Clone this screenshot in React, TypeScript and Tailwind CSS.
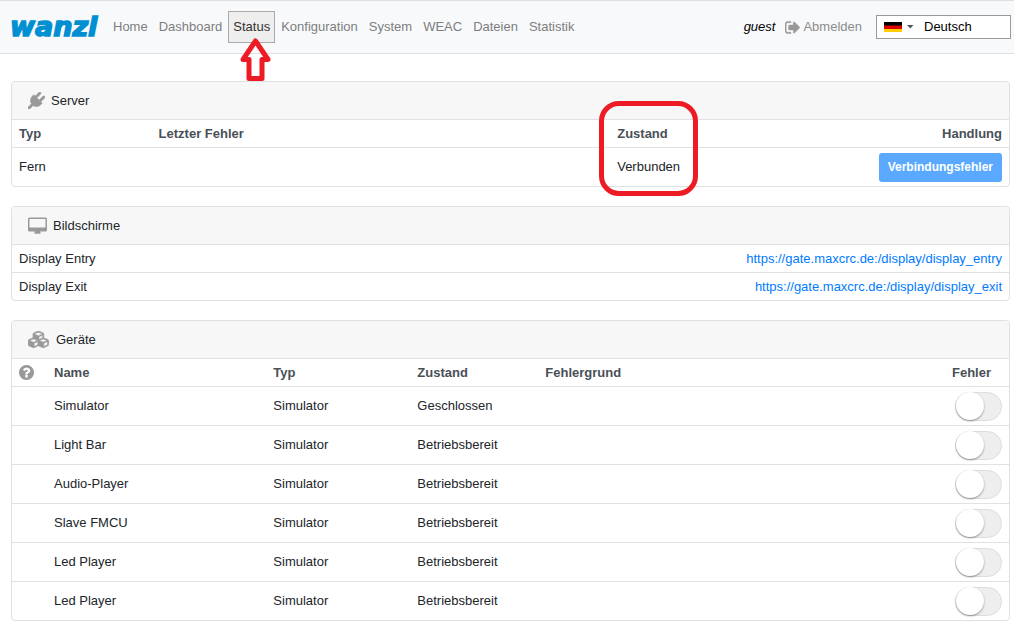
import { useState } from "react";
import type { ReactNode } from "react";
import clsx from "clsx";

const NAV_LINKS = [
  "Home",
  "Dashboard",
  "Status",
  "Konfiguration",
  "System",
  "WEAC",
  "Dateien",
  "Statistik",
];

const DISPLAYS = [
  { name: "Display Entry", url: "https://gate.maxcrc.de:/display/display_entry" },
  { name: "Display Exit", url: "https://gate.maxcrc.de:/display/display_exit" },
];

const DEVICES = [
  { name: "Simulator", state: "Geschlossen" },
  { name: "Light Bar", state: "Betriebsbereit" },
  { name: "Audio-Player", state: "Betriebsbereit" },
  { name: "Slave FMCU", state: "Betriebsbereit" },
  { name: "Led Player", state: "Betriebsbereit" },
  { name: "Led Player", state: "Betriebsbereit" },
];

const TH = "h-7 border-t border-[#dee2e6] px-[7px] text-left font-bold text-[#495057]";
const TD = "border-t border-[#dee2e6] px-[7px]";

function PlugIcon() {
  return (
    <svg
      viewBox="0 0 1792 1792"
      fill="currentColor"
      stroke="currentColor"
      strokeWidth="60"
      className="size-[17px]"
    >
      <path d="M1755 453q37 38 37 90.5t-37 90.5l-401 400 150 150-160 160q-163 163-389.5 186.5t-411.5-100.5l-362 362h-181v-181l362-362q-124-185-100.5-411.5t186.5-389.5l160-160 150 150 400-401q38-37 91-37t90 37 37 90.5-37 90.5l-400 401 234 234 401-400q38-37 91-37t90 37z" />
    </svg>
  );
}

function DesktopIcon() {
  return (
    <svg viewBox="0 0 19 17" fill="currentColor" className="h-[17px] w-[19px]">
      <path
        fillRule="evenodd"
        d="M1.5 0.5h16a1.5 1.5 0 0 1 1.5 1.5v11a1.5 1.5 0 0 1-1.5 1.5h-5.3c0 .8.5 1.1.5 1.6q0 .6-.6.6H6.9q-.6 0-.6-.6c0-.5.5-.8.5-1.6H1.5A1.5 1.5 0 0 1 0 13V2A1.5 1.5 0 0 1 1.5.5zM1.5 2.200v8.300h16V2.200q0-.2-.2-.2H1.700q-.2 0-.2.2z"
      />
    </svg>
  );
}

function CubesIcon() {
  return (
    <svg
      viewBox="0 0 2304 1792"
      fill="currentColor"
      stroke="currentColor"
      strokeWidth="50"
      className="h-[17px] w-[22px]"
    >
      <path d="M640 1632l384-192v-314l-384 164v342zm-64-454l404-173-404-173-404 173zm1088 454l384-192v-314l-384 164v342zm-64-454l404-173-404-173-404 173zm-448-293l384-165v-266l-384 164v267zm-64-379l441-189-441-189-441 189zm1088 518v416q0 36-19 67t-52 47l-448 224q-25 14-57 14t-57-14l-448-224q-4-2-7-4-2 2-7 4l-448 224q-25 14-57 14t-57-14l-448-224q-33-16-52-47t-19-67v-416q0-38 21.5-70t56.5-48l434-186v-400q0-38 21.5-70t56.5-48l448-192q23-10 50-10t50 10l448 192q35 16 56.5 48t21.5 70v400l434 186q36 16 57 48t21 70z" />
    </svg>
  );
}

function QuestionIcon() {
  return (
    <svg viewBox="128 128 1536 1536" fill="#999" className="size-[15px]">
      <path d="M1024 1376v-192q0-14-9-23t-23-9h-192q-14 0-23 9t-9 23v192q0 14 9 23t23 9h192q14 0 23-9t9-23zm256-672q0-88-55.5-163t-138.5-116-170-41q-243 0-371 213-15 24 8 42l132 100q7 6 19 6 16 0 25-12 53-68 86-92 34-24 86-24 48 0 85.5 26t37.5 59q0 38-20 61t-68 45q-63 28-115.5 86.5t-52.5 125.5v36q0 14 9 23t23 9h192q14 0 23-9t9-23q0-19 21.5-49.5t54.5-49.5q32-18 49-28.5t46-35 44.5-48 28-60.5 12.5-81zm384 192q0 209-103 385.5t-279.5 279.5-385.5 103-385.5-103-279.5-279.5-103-385.5 103-385.5 279.5-279.5 385.5-103 385.5 103 279.5 279.5 103 385.5z" />
    </svg>
  );
}

function SignOutIcon() {
  return (
    <svg
      viewBox="64 0 1600 1792"
      fill="#999"
      stroke="#999"
      strokeWidth="50"
      className="h-[17px] w-[15px]"
    >
      <path d="M704 1440q0 4 1 20t.5 26.5-3 23.5-10 19.5-20.5 6.5h-320q-119 0-203.5-84.5t-84.5-203.5v-704q0-119 84.5-203.5t203.5-84.5h320q13 0 22.5 9.5t9.5 22.5q0 4 1 20t.5 26.5-3 23.5-10 19.5-20.5 6.5h-320q-66 0-113 47t-47 113v704q0 66 47 113t113 47h312l11.5 1 11.5 3 8 5.5 7 9 2 13.5zm928-544q0 26-19 45l-544 544q-19 19-45 19t-45-19-19-45v-288h-448q-26 0-45-19t-19-45v-384q0-26 19-45t45-19h448v-288q0-26 19-45t45-19 45 19l544 544q19 19 19 45z" />
    </svg>
  );
}

function Logo() {
  return (
    <a href="#home" aria-label="wanzl">
      <svg viewBox="0 0 92 32" className="h-8 w-[92px] overflow-visible">
        <text
          x="0"
          y="25"
          fill="#0090d2"
          stroke="#0090d2"
          strokeWidth="1.5"
          className="font-['DejaVu_Sans'] text-[27px] font-bold italic"
        >
          wanzl
        </text>
      </svg>
    </a>
  );
}

// red arrow pointing up at the active link
function Arrow() {
  return (
    <svg
      viewBox="0 0 32 43"
      fill="none"
      stroke="#ed1c24"
      strokeWidth="5"
      strokeLinejoin="round"
      className="pointer-events-none absolute top-[26px] left-[11px] z-10 h-[43px] w-8"
    >
      <path d="M15.5 3L28 21.5H22V40.500H9V21.5H3Z" />
    </svg>
  );
}

function Header() {
  return (
    <header className="flex h-[54px] items-center border-y border-[#dee0e3] bg-[#f8f9fb] pr-[3px] pl-[10px]">
      <Logo />
      <nav className="ml-[6px] flex items-center gap-px text-[#7d7e80]">
        {NAV_LINKS.map((link) => (
          <a
            key={link}
            href={`#${link.toLowerCase()}`}
            className={clsx(
              "relative flex h-8 items-center border px-1",
              link === "Status"
                ? "border-[#aaa] bg-[#eee] text-[#333]"
                : "border-transparent"
            )}
          >
            {link}
            {link === "Status" && <Arrow />}
          </a>
        ))}
      </nav>
      <div className="ml-auto flex items-center">
        <span className="text-black italic">guest</span>
        <a href="#logout" className="ml-[10px] flex items-center gap-[3px] text-[#8c8c8c]">
          <SignOutIcon />
          Abmelden
        </a>
        <div className="relative ml-[14px]">
          <select
            aria-label="Sprache"
            className="block h-6 w-[135px] appearance-none border border-[#999] bg-white pl-[47px] text-black"
          >
            <option>Deutsch</option>
            <option>English</option>
          </select>
          <svg
            viewBox="0 0 30 10"
            className="pointer-events-none absolute top-[7px] left-2 h-[10px] w-[30px]"
          >
            <path fill="#000" d="M0 0h18v4H0z" />
            <path fill="#d00" d="M0 3.5h18v3.5H0z" />
            <path fill="#ffce00" d="M0 7h18v3H0z" />
            <path fill="#555" d="M23 3h6.500l-3.250 3.500z" />
          </svg>
        </div>
      </div>
    </header>
  );
}

function Card({
  icon,
  title,
  children,
}: {
  icon: ReactNode;
  title: string;
  children: ReactNode;
}) {
  return (
    <section className="rounded border border-[#dee0e2] bg-white">
      <h2 className="flex h-[37px] items-center gap-[6px] rounded-t bg-[#f7f7f7] pl-4">
        <span className="text-[#999]">{icon}</span>
        {title}
      </h2>
      {children}
    </section>
  );
}

function Toggle({ label }: { label: string }) {
  const [checked, setChecked] = useState(false);

  return (
    <input
      type="checkbox"
      role="switch"
      aria-label={label}
      checked={checked}
      onChange={() => setChecked(!checked)}
      className="relative ml-auto block h-[29px] w-[47px] appearance-none rounded-full border border-[#ddd] bg-[#eee] before:absolute before:-top-px before:left-0 before:size-7 before:rounded-full before:bg-white before:shadow-[0_1px_2px_rgba(0,0,0,0.4)] checked:bg-[#5aa9ff] checked:before:left-[18px]"
    />
  );
}

export default function App() {
  return (
    <div className="min-h-screen bg-white font-['Liberation_Sans',Arial,sans-serif] text-[13px] leading-5 text-[#212529]">
      <Header />
      <main className="flex flex-col gap-[19px] pt-[27px] pr-1 pb-2 pl-[11px]">
        <Card icon={<PlugIcon />} title="Server">
          <table className="w-full table-fixed border-separate border-spacing-0">
            <thead>
              <tr>
                <th className={clsx(TH, "w-[14%]")}>Typ</th>
                <th className={clsx(TH, "w-[46%]")}>Letzter Fehler</th>
                <th className={clsx(TH, "relative")}>
                  Zustand
                  <span className="pointer-events-none absolute -top-[19px] -left-[11px] h-[95px] w-[99px] rounded-[20px] border-5 border-[#ed1c24]" />
                </th>
                <th className={clsx(TH, "text-right")}>Handlung</th>
              </tr>
            </thead>
            <tbody>
              <tr className="h-[39px]">
                <td className={TD}>Fern</td>
                <td className={TD} />
                <td className={TD}>Verbunden</td>
                <td className={TD}>
                  <button
                    type="button"
                    className="ml-auto block h-[29px] rounded-[3px] bg-[#5aa9ff] px-[9px] text-xs font-bold text-white"
                  >
                    Verbindungsfehler
                  </button>
                </td>
              </tr>
            </tbody>
          </table>
        </Card>

        <Card icon={<DesktopIcon />} title="Bildschirme">
          <table className="w-full border-separate border-spacing-0">
            <tbody>
              {DISPLAYS.map((display) => (
                <tr key={display.name} className="h-7">
                  <td className={TD}>{display.name}</td>
                  <td className={clsx(TD, "text-right")}>
                    <a href={display.url} className="text-[#007bff]">
                      {display.url}
                    </a>
                  </td>
                </tr>
              ))}
            </tbody>
          </table>
        </Card>

        <Card icon={<CubesIcon />} title="Geräte">
          <table className="w-full table-fixed border-separate border-spacing-0">
            <thead>
              <tr>
                <th className={clsx(TH, "w-[35px]")}>
                  <QuestionIcon />
                </th>
                <th className={clsx(TH, "w-[22%]")}>Name</th>
                <th className={clsx(TH, "w-36")}>Typ</th>
                <th className={clsx(TH, "w-32")}>Zustand</th>
                <th className={TH}>Fehlergrund</th>
                <th className={clsx(TH, "w-16")}>Fehler</th>
              </tr>
            </thead>
            <tbody>
              {DEVICES.map((device, i) => (
                <tr key={i} className="h-[39px]">
                  <td className={TD} />
                  <td className={TD}>{device.name}</td>
                  <td className={TD}>Simulator</td>
                  <td className={TD}>{device.state}</td>
                  <td className={TD} />
                  <td className={TD}>
                    <Toggle label={`Fehler ${device.name}`} />
                  </td>
                </tr>
              ))}
            </tbody>
          </table>
        </Card>
      </main>
    </div>
  );
}
